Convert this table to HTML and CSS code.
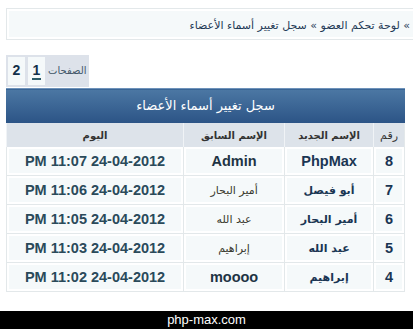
FILE: index.html
```html
<!DOCTYPE html>
<html lang="ar">
<head>
<meta charset="utf-8">
<link rel="stylesheet" href="styles.css">
</head>
<body>
<div class="page">
  <div class="crumb"><div class="crumb-in">» لوحة تحكم العضو » سجل تغيير أسماء الأعضاء</div></div>
  <div class="pager">
    <span class="pager-label">الصفحات</span>
    <span class="pg cur"><u>1</u></span>
    <span class="pg">2</span>
  </div>
  <table class="log">
    <colgroup>
      <col class="w-num"><col class="w-new"><col class="w-old"><col class="w-date">
    </colgroup>
    <thead>
      <tr><th colspan="4" class="title">سجل تغيير أسماء الأعضاء</th></tr>
      <tr class="cols"><th class="c-num">رقم</th><th>الإسم الجديد</th><th>الإسم السابق</th><th>اليوم</th></tr>
    </thead>
    <tbody>
      <tr><td class="num">8</td><td class="new lat">PhpMax</td><td class="old lat">Admin</td><td class="date">24-04-2012 11:07 PM</td></tr>
      <tr><td class="num">7</td><td class="new">أبو فيصل</td><td class="old">أمير البحار</td><td class="date">24-04-2012 11:06 PM</td></tr>
      <tr><td class="num">6</td><td class="new">أمير البحار</td><td class="old">عبد الله</td><td class="date">24-04-2012 11:05 PM</td></tr>
      <tr><td class="num">5</td><td class="new">عبد الله</td><td class="old">إبراهيم</td><td class="date">24-04-2012 11:03 PM</td></tr>
      <tr><td class="num">4</td><td class="new">إبراهيم</td><td class="old lat">moooo</td><td class="date">24-04-2012 11:02 PM</td></tr>
    </tbody>
  </table>
</div>
<div class="footer">php-max.com</div>
</body>
</html>
```
FILE: styles.css
```css
html, body {
  margin: 0;
  padding: 0;
  background: #fff;
  overflow: hidden;
  width: 413px;
  height: 329px;
}
body {
  font-family: "DejaVu Sans", "Liberation Sans", sans-serif;
}
.page {
  padding: 8px 0 0 6px;
  height: 303px;
}
.crumb {
  width: 407px;
  border: 1px solid #e3e8ea;
  border-right: 0;
  padding: 2px 0 2px 2px;
  box-sizing: border-box;
  height: 32px;
}
.crumb-in {
  background: #f5f9fa;
  height: 26px;
  direction: rtl;
  font-size: 11px;
  color: #1f3a56;
  line-height: 29px;
  padding-right: 3px;
  white-space: nowrap;
  overflow: hidden;
}
.pager {
  margin-top: 15px;
  display: flex;
  width: fit-content;
  direction: rtl;
  align-items: stretch;
  background: #dde2ea;
  padding: 2px;
  height: 28px;
  gap: 3px;
}
.pager-label {
  font-size: 10px;
  color: #44596a;
  line-height: 28px;
  padding: 0 1px 0 0;
}
.pg {
  width: 17px;
  background: #f5f9fa;
  font-family: "Liberation Sans", sans-serif;
  font-weight: bold;
  font-size: 14px;
  color: #14304a;
  text-align: center;
  line-height: 26px;
}
.pg u {
  text-decoration: none;
  border-bottom: 2px solid #2c5a66;
  padding: 0 1px;
}
.log {
  margin-top: 1px;
  width: 399px;
  direction: rtl;
  border-collapse: separate;
  border-spacing: 0;
  table-layout: fixed;
}
.w-num { width: 32px; }
.w-new { width: 89px; }
.w-old { width: 101px; }
.w-date { width: 177px; }
.title {
  height: 35px;
  padding: 0;
  background: linear-gradient(#4d79a5, #2c5486);
  box-shadow: inset 0 1px 0 #6d92ba, inset 0 2px 0 #3a6595;
  color: #fff;
  font-weight: normal;
  font-size: 13px;
  box-sizing: border-box;
}
.cols th {
  height: 24px;
  padding: 0;
  box-sizing: border-box;
  background: #dde3ea;
  border-left: 1px solid #f0f3f6;
  font-size: 10px;
  font-weight: bold;
  color: #333;
  white-space: nowrap;
}
.cols .c-num { font-weight: normal; font-size: 11px; border-right: 1px solid #e3e8ea; }
tbody td {
  height: 29px;
  padding: 0;
  box-sizing: border-box;
  border-left: 1px solid #e3e8ea;
  border-bottom: 1px solid #e3e8ea;
  background: #f5f9fa;
  box-shadow: inset 0 0 0 2px #fff;
  text-align: center;
  color: #1a3553;
  white-space: nowrap;
  font-size: 11px;
}
tbody td.num { border-right: 1px solid #e3e8ea; }
.new { font-weight: bold; }
.old { color: #3a3a2e; }
tbody .num, tbody .date, tbody .lat {
  font-family: "Liberation Sans", sans-serif;
  font-weight: bold;
  font-size: 14.5px;
}
tbody .date { color: #2a4a5a; }
tbody .old.lat { color: #1e3444; }
.footer {
  height: 18px;
  background: #000;
  color: #fff;
  font-family: "Liberation Sans", sans-serif;
  font-size: 13px;
  line-height: 18px;
  text-align: center;
}
```
